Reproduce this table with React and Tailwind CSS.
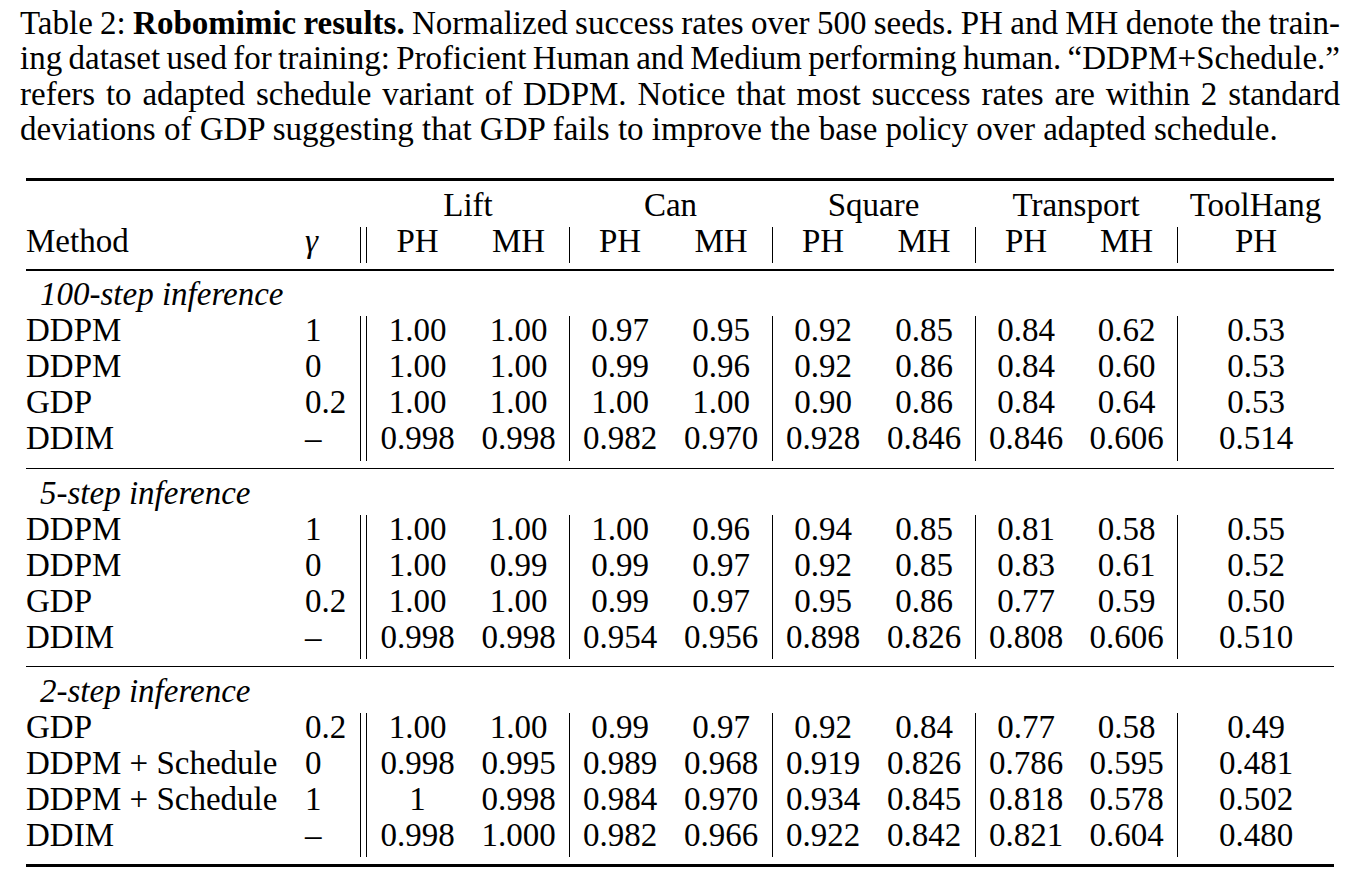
const sections = [
  {
    title: "100-step inference",
    rows: [
      ["DDPM", "1", "1.00", "1.00", "0.97", "0.95", "0.92", "0.85", "0.84", "0.62", "0.53"],
      ["DDPM", "0", "1.00", "1.00", "0.99", "0.96", "0.92", "0.86", "0.84", "0.60", "0.53"],
      ["GDP", "0.2", "1.00", "1.00", "1.00", "1.00", "0.90", "0.86", "0.84", "0.64", "0.53"],
      ["DDIM", "–", "0.998", "0.998", "0.982", "0.970", "0.928", "0.846", "0.846", "0.606", "0.514"],
    ],
  },
  {
    title: "5-step inference",
    rows: [
      ["DDPM", "1", "1.00", "1.00", "1.00", "0.96", "0.94", "0.85", "0.81", "0.58", "0.55"],
      ["DDPM", "0", "1.00", "0.99", "0.99", "0.97", "0.92", "0.85", "0.83", "0.61", "0.52"],
      ["GDP", "0.2", "1.00", "1.00", "0.99", "0.97", "0.95", "0.86", "0.77", "0.59", "0.50"],
      ["DDIM", "–", "0.998", "0.998", "0.954", "0.956", "0.898", "0.826", "0.808", "0.606", "0.510"],
    ],
  },
  {
    title: "2-step inference",
    rows: [
      ["GDP", "0.2", "1.00", "1.00", "0.99", "0.97", "0.92", "0.84", "0.77", "0.58", "0.49"],
      ["DDPM + Schedule", "0", "0.998", "0.995", "0.989", "0.968", "0.919", "0.826", "0.786", "0.595", "0.481"],
      ["DDPM + Schedule", "1", "1", "0.998", "0.984", "0.970", "0.934", "0.845", "0.818", "0.578", "0.502"],
      ["DDIM", "–", "0.998", "1.000", "0.982", "0.966", "0.922", "0.842", "0.821", "0.604", "0.480"],
    ],
  },
];

const gridCols =
  "grid grid-cols-[279px_55px_7px_101px_101px_101px_102px_101px_102px_101px_101px_157px]";

// first cell of each task group carries the single vertical rule
const groupStart = [2, 4, 6, 8];

function ValueRow({ method, gamma, values, height = "h-[36.1px]" }) {
  return (
    <div className={`${gridCols} ${height} leading-[29px]`}>
      <div className="whitespace-nowrap">{method}</div>
      <div>{gamma}</div>
      <div className="border-x border-black" />
      {values.map((v, i) => (
        <div
          key={i}
          className={`text-center ${groupStart.includes(i) ? "border-l border-black" : ""}`}
        >
          {v}
        </div>
      ))}
    </div>
  );
}

function App() {
  return (
    <div className="w-[1355px] h-[885px] bg-white text-black font-['Liberation_Serif','Times_New_Roman',serif] overflow-hidden">
      <div className="pt-[6px] pl-[20px] pr-[15px] text-[33px] leading-[35.3px]">
        <div className="whitespace-nowrap text-justify [text-align-last:justify] [word-spacing:-3px]">
          Table 2: <b>Robomimic results.</b> Normalized success rates over 500 seeds. PH and MH denote the train-
        </div>
        <div className="whitespace-nowrap text-justify [text-align-last:justify] [word-spacing:-3.5px]">
          ing dataset used for training: Proficient Human and Medium performing human. “DDPM+Schedule.”
        </div>
        <div className="whitespace-nowrap text-justify [text-align-last:justify] [word-spacing:-2px]">
          refers to adapted schedule variant of DDPM. Notice that most success rates are within 2 standard
        </div>
        <div className="whitespace-nowrap">
          deviations of GDP suggesting that GDP fails to improve the base policy over adapted schedule.
        </div>
      </div>

      <div className="mt-[31px] mx-[26px] w-[1308px] text-[33px]">
        <div className="h-[3px] bg-black" />

        <div className={`${gridCols} h-9 leading-[29px] mt-[9.5px]`}>
          <div />
          <div />
          <div />
          <div className="col-span-2 text-center">Lift</div>
          <div className="col-span-2 text-center">Can</div>
          <div className="col-span-2 text-center">Square</div>
          <div className="col-span-2 text-center">Transport</div>
          <div className="text-center">ToolHang</div>
        </div>
        <ValueRow
          method="Method"
          gamma={<span className="italic">γ</span>}
          values={["PH", "MH", "PH", "MH", "PH", "MH", "PH", "MH", "PH"]}
          height="h-9"
        />
        <div className="h-[1.5px] bg-black mt-[6.5px]" />

        {sections.map((s, si) => (
          <div key={si}>
            <div className="h-9 leading-[29px] mt-[9.5px] pl-[14px] italic">{s.title}</div>
            {s.rows.map((r, ri) => (
              <ValueRow key={ri} method={r[0]} gamma={r[1]} values={r.slice(2)} />
            ))}
            <div
              className={`${si === sections.length - 1 ? "h-[3px]" : "h-[1.5px]"} bg-black mt-[7px]`}
            />
          </div>
        ))}
      </div>
    </div>
  );
}

export default App;
